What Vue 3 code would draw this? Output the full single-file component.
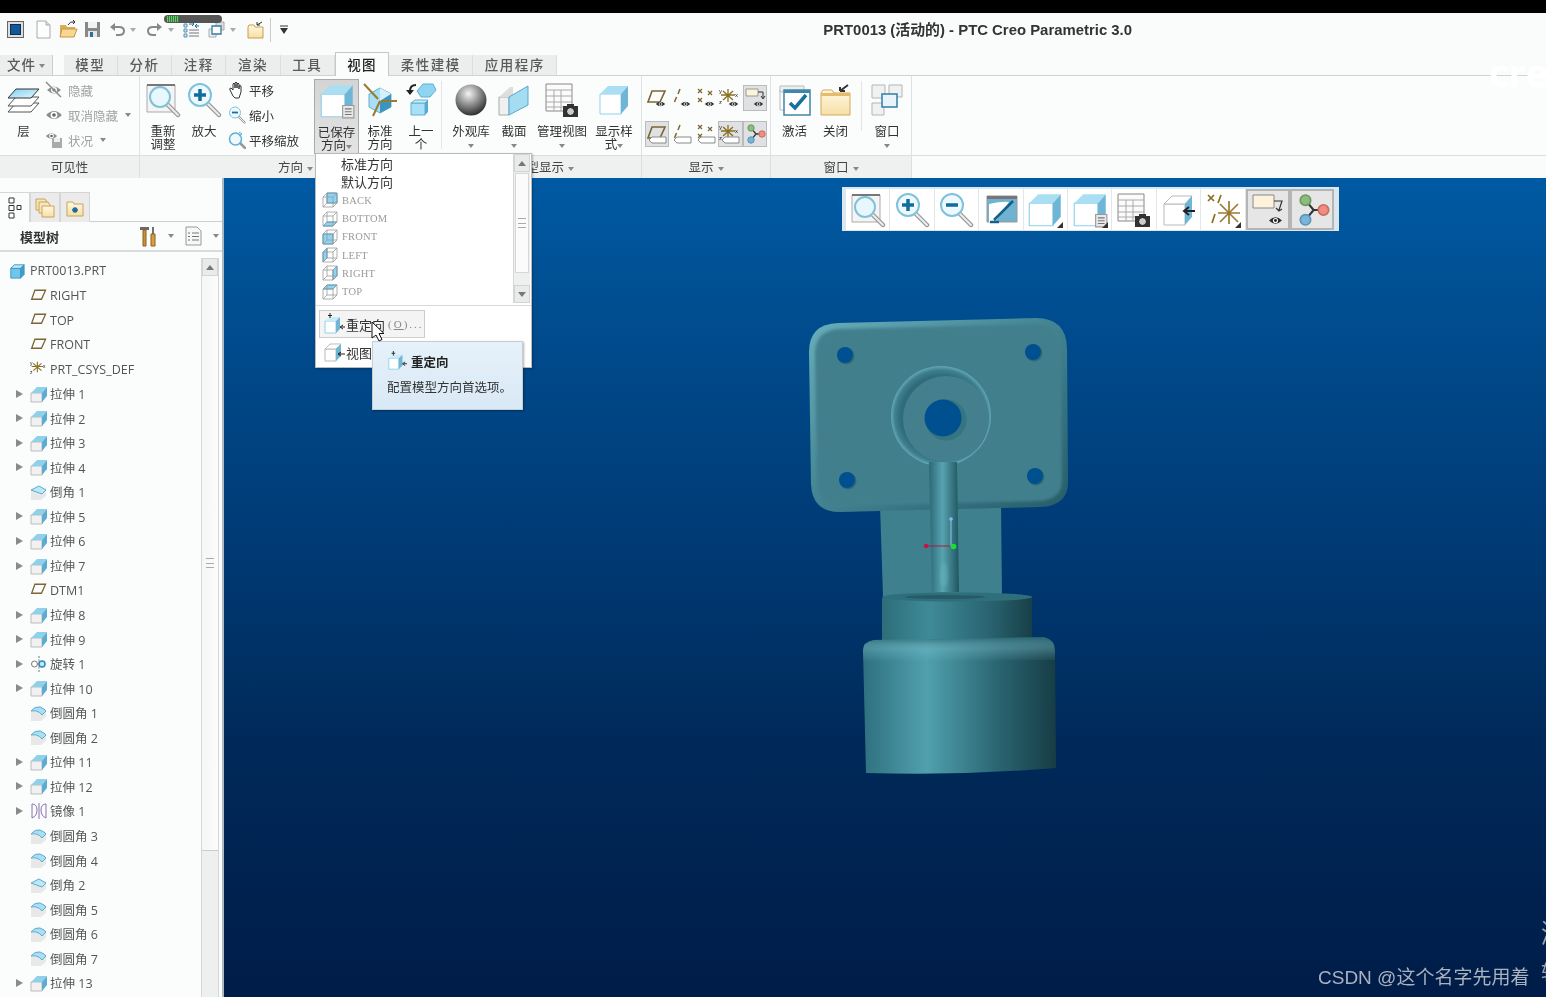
<template>
  <div class="app">
    <!-- shared icons -->
    <svg class="defs" width="0" height="0">
      <defs>
        <linearGradient id="gLayer" x1="0" y1="0" x2="1" y2="1"><stop offset="0" stop-color="#7fd0f0"/><stop offset="1" stop-color="#e6f6fc"/></linearGradient>
        <radialGradient id="gSphere" cx="0.42" cy="0.3" r="0.75"><stop offset="0" stop-color="#f4f4f4"/><stop offset="0.5" stop-color="#8a8a8a"/><stop offset="1" stop-color="#222"/></radialGradient>
        <linearGradient id="gPlate" x1="0" y1="0" x2="1" y2="1"><stop offset="0" stop-color="#68aebb"/><stop offset="0.55" stop-color="#3f7f8d"/><stop offset="1" stop-color="#255c69"/></linearGradient>
        <radialGradient id="gRing" cx="0.5" cy="0.5" r="0.5"><stop offset="0.8" stop-color="#2f6b78"/><stop offset="0.92" stop-color="#3f7f8d"/><stop offset="1" stop-color="#62a8b5"/></radialGradient>
        <linearGradient id="gStem"><stop offset="0" stop-color="#2c6875"/><stop offset="0.45" stop-color="#58a3b0"/><stop offset="1" stop-color="#1f5561"/></linearGradient>
        <linearGradient id="gCylA"><stop offset="0" stop-color="#2e6d7a"/><stop offset="0.32" stop-color="#3f8a98"/><stop offset="0.75" stop-color="#27606c"/><stop offset="1" stop-color="#173f47"/></linearGradient>
        <linearGradient id="gCylB"><stop offset="0" stop-color="#2f7080"/><stop offset="0.33" stop-color="#50a0ae"/><stop offset="0.72" stop-color="#28626e"/><stop offset="1" stop-color="#173d45"/></linearGradient>
        <linearGradient id="gBevel" x1="0" y1="0" x2="0" y2="1"><stop offset="0" stop-color="#2a6572" stop-opacity="0.9"/><stop offset="0.5" stop-color="#7cc0cc" stop-opacity="0.35"/><stop offset="1" stop-color="#7cc0cc" stop-opacity="0"/></linearGradient>
        <linearGradient id="gFolder" x1="0" y1="0" x2="0" y2="1"><stop offset="0" stop-color="#fff8e2"/><stop offset="1" stop-color="#f6dfa6"/></linearGradient>
        <filter id="soft" x="-10%" y="-10%" width="120%" height="120%"><feGaussianBlur stdDeviation="1.500"/></filter>
        <symbol id="cube" viewBox="0 0 32 32"><path d="M2 10h21v20H2z" fill="#fff" stroke="#8fd0ea"/><path d="M2 10l8-8h20l-7 8z" fill="#a9def3"/><path d="M23 10l7-8v20l-7 8z" fill="#6fb6d6"/></symbol>
        <symbol id="docbadge" viewBox="0 0 32 32"><path d="M21 20h10v11H21z" fill="#e8e8e8" stroke="#999"/><path d="M23 23h6M23 25.500h6M23 28h6" stroke="#777"/></symbol>
        <symbol id="corner" viewBox="0 0 36 36"><path d="M36 30v6h-6z" fill="#333"/></symbol>
        <symbol id="layer" viewBox="0 0 34 28"><path d="M9 17h23l-8 9H1z" fill="#fff" stroke="#555"/><path d="M9 11h23l-8 9H1z" fill="#fff" stroke="#555"/><path d="M9 3h23l-8 9H1z" fill="url(#gLayer)" stroke="#333"/></symbol>
        <symbol id="eye" viewBox="0 0 16 12"><path d="M1 6q7-7 14 0q-7 7-14 0z" fill="#8d8d8d"/><circle cx="8" cy="6" r="3" fill="#fff"/><circle cx="8" cy="6" r="1.600" fill="#666"/></symbol>
        <symbol id="eyedark" viewBox="0 0 16 12"><path d="M1 6q7-7 14 0q-7 7-14 0z" fill="#2b2b2b"/><circle cx="8" cy="6" r="2.800" fill="#fff"/><circle cx="8" cy="6" r="1.600" fill="#222"/></symbol>
        <symbol id="hide" viewBox="0 0 18 18"><use href="#eye" x="1" y="3" width="16" height="12"/><path d="M1 1l15 15" stroke="#8d8d8d" stroke-width="1.500"/></symbol>
        <symbol id="status" viewBox="0 0 18 18"><use href="#eye" x="0" y="0" width="13" height="10"/><path d="M7 7h10v10H7z" fill="#aaa"/><path d="M9 7h6v4H9z" fill="#eee"/></symbol>
        <symbol id="refit" viewBox="0 0 36 36"><path d="M2 3h28v27H2z" fill="#f4f4f4" stroke="#aaa"/><path d="M2 3h28" stroke="#777" stroke-width="2"/><path d="M22 22l11 11" stroke="#999" stroke-width="4.500" stroke-linecap="round"/><path d="M22 22l11 11" stroke="#eee" stroke-width="2" stroke-linecap="round"/><circle cx="15" cy="15" r="10" fill="#e8f7fc" stroke="#7fc2dc" stroke-width="2"/></symbol>
        <symbol id="zoomin" viewBox="0 0 36 36"><path d="M21 21l12 12" stroke="#999" stroke-width="4.500" stroke-linecap="round"/><path d="M21 21l12 12" stroke="#eee" stroke-width="2" stroke-linecap="round"/><circle cx="14" cy="13" r="11" fill="#eef9fd" stroke="#7fc2dc" stroke-width="2"/><path d="M14 7v12M8 13h12" stroke="#0f6d9f" stroke-width="3.500"/></symbol>
        <symbol id="zoomout" viewBox="0 0 36 36"><path d="M21 21l12 12" stroke="#999" stroke-width="4.500" stroke-linecap="round"/><path d="M21 21l12 12" stroke="#eee" stroke-width="2" stroke-linecap="round"/><circle cx="14" cy="13" r="11" fill="#eef9fd" stroke="#7fc2dc" stroke-width="2"/><path d="M8 13h12" stroke="#0f6d9f" stroke-width="3.500"/></symbol>
        <symbol id="panzoom" viewBox="0 0 18 18"><path d="M11 11l6 6" stroke="#999" stroke-width="2.500" stroke-linecap="round"/><circle cx="7.500" cy="8" r="6" fill="#eef9fd" stroke="#5fb0d2" stroke-width="1.500"/><path d="M11 1l3 2-3 2" fill="none" stroke="#5fb0d2"/></symbol>
        <symbol id="hand" viewBox="0 0 18 18"><path d="M5 15L2 9q-1-2 1-2l2 2V3q1-2 2 0v4-5q1-2 2 0v5-4q1-2 2 0v5-3q1-1 2 0v6l-2 6H7z" fill="#fff" stroke="#333" stroke-linejoin="round"/></symbol>
        <symbol id="std" viewBox="0 0 36 36"><path d="M18 6l11 6v13l-11 6-11-6V12z" fill="#a9def3" stroke="#5fb0d2"/><path d="M18 6l11 6-11 7z" fill="#d5f0fa"/><path d="M18 19l11-7v13l-11 6z" fill="#3d95bf"/><path d="M2 2l14 15M19 19h16M18 19L11 34" stroke="#9a7a30" stroke-width="2"/></symbol>
        <symbol id="prev" viewBox="0 0 36 36"><path d="M14 9l6-7h10l3 6-6 7H18z" fill="#8fd4f0" stroke="#5fb0d2"/><path d="M8 21h14v12H8z" fill="#a9e0f6" stroke="#5fb0d2"/><path d="M8 21l4-3h13l-3 3z" fill="#c9ecf9" stroke="#5fb0d2"/><path d="M22 21l3-3v12l-3 3z" fill="#5aa9cf"/><path d="M13 3Q7 3 7 9" fill="none" stroke="#222" stroke-width="2"/><path d="M3 8h8l-4 5z" fill="#222"/></symbol>
        <symbol id="sphere" viewBox="0 0 32 32"><circle cx="16" cy="16" r="15.500" fill="url(#gSphere)"/></symbol>
        <symbol id="section" viewBox="0 0 32 32"><path d="M1 13h10v18H1z" fill="#f0f0f0" stroke="#aaa"/><path d="M1 13L12 3h3v10z" fill="#ddd"/><path d="M11 13l19-11v19L11 31z" fill="#a4dcf2" stroke="#59a9cc"/></symbol>
        <symbol id="table" viewBox="0 0 36 36"><path d="M2 2h26v27H2z" fill="#fbfbfb" stroke="#888"/><path d="M2 8h26M2 14h26M2 20h26M2 25h26M10 8v21M17 8v21" stroke="#aaa"/><path d="M19 24h15v11H19z" fill="#333"/><path d="M23 22h7v3h-7z" fill="#333"/><circle cx="26.500" cy="29.500" r="4" fill="#ccc" stroke="#111"/></symbol>
        <symbol id="activate" viewBox="0 0 32 32"><path d="M1 2h24v6H1z" fill="#eee" stroke="#bbb"/><path d="M1 6v20h4" fill="#fff" stroke="#bbb"/><path d="M5 6h26v25H5z" fill="#fff" stroke="#3f87a8" stroke-width="1.500"/><path d="M5 6h26v3H5z" fill="#3f87a8"/><path d="M11 19l5 5 11-13" fill="none" stroke="#17709f" stroke-width="3.500"/></symbol>
        <symbol id="closewin" viewBox="0 0 32 32"><path d="M1 9l2-3h9l2 3h16v22H1z" fill="url(#gFolder)" stroke="#d4a95a"/><path d="M1 9h29v3H1z" fill="#e6bc6c"/><path d="M28 1l-8 6M20 7v-4M20 7h5" stroke="#333" stroke-width="2" fill="none"/></symbol>
        <symbol id="windows" viewBox="0 0 32 32"><path d="M1 1h13v13H1zM18 1h13v12H18zM1 19h12v12H1z" fill="#f1f1f1" stroke="#b5b5b5"/><path d="M11 10h15v13H11z" fill="#e8f4fa" stroke="#2f7ea6" stroke-width="1.500"/></symbol>
        <symbol id="plane" viewBox="0 0 22 22"><path d="M6 4h13l-5 11H2z" fill="none" stroke="#7d6530" stroke-width="1.600"/></symbol>
        <symbol id="axis" viewBox="0 0 22 22"><path d="M9 2L7 7M5.500 10L3.500 15" stroke="#7d6530" stroke-width="1.500"/></symbol>
        <symbol id="points" viewBox="0 0 22 22"><path d="M3 2l4 4m0-4L3 6M13 4l4 4m0-4l-4 4M3 11l4 4m0-4l-4 4" stroke="#7d6530" stroke-width="1.200"/></symbol>
        <symbol id="csys" viewBox="0 0 22 22"><path d="M9 2v13M4 4l10 9M14 4L4 13M2 8h14" stroke="#8a6d20" stroke-width="1.300"/><text x="0" y="6" font-size="6" font-family="Liberation Sans" fill="#222">y</text><text x="0" y="17" font-size="6" font-family="Liberation Sans" fill="#222">z</text><text x="16" y="10" font-size="6" font-family="Liberation Sans" fill="#222">x</text></symbol>
        <symbol id="annot" viewBox="0 0 22 22"><path d="M2 2h12v7H2z" fill="#fdf3dc" stroke="#999"/><path d="M14 5h5v6m-2-2l2 3 2-3" fill="none" stroke="#333"/></symbol>
        <symbol id="badgeeye" viewBox="0 0 22 22"><use href="#eyedark" x="9" y="13" width="11" height="8"/></symbol>
        <symbol id="badgetag" viewBox="0 0 22 22"><path d="M3 17l3-3h14v6H6z" fill="#fff" stroke="#8a8a8a"/></symbol>
        <symbol id="node" viewBox="0 0 22 22"><path d="M7 5l5 6-5 6M12 11h6" fill="none" stroke="#333" stroke-width="1.300"/><circle cx="7" cy="5" r="3.200" fill="#8cbc80" stroke="#6a9a60"/><circle cx="18" cy="11" r="3.200" fill="#ee8d80" stroke="#c76c60"/><circle cx="7" cy="17" r="3.200" fill="#7ab4d8" stroke="#5a94b8"/></symbol>
        <symbol id="sectionview" viewBox="0 0 36 36"><path d="M4 4h30v26H4z" fill="#6fb3d0" stroke="#999"/><path d="M4 4h30v3H4z" fill="#777"/><path d="M6 30V12q14-3 20-2l-14 20z" fill="#fff"/><path d="M7 30h9M11 28L30 9" stroke="#145f8c" stroke-width="2.500"/></symbol>
        <symbol id="cubearrow" viewBox="0 0 36 36"><path d="M4 12h21v21H4z" fill="#fff" stroke="#b9b9b9"/><path d="M4 12l8-8h20l-7 8z" fill="#fff" stroke="#b9b9b9"/><path d="M25 12l7-8v21l-7 8z" fill="#6fb6d6"/><path d="M35 19H24m5-4l-5 4 5 4" fill="none" stroke="#222" stroke-width="2"/></symbol>
        <symbol id="datums" viewBox="0 0 36 36"><path d="M3 3l6 6m0-6L3 9M16 3l-3 8M10 22l-3 9" stroke="#8a6d20" stroke-width="1.700"/><path d="M24 9v23M15 12l18 18M33 12L15 30M13 21h22" stroke="#9a7a30" stroke-width="1.700"/></symbol>
        <symbol id="annotlarge" viewBox="0 0 36 36"><path d="M3 3h21v13H3z" fill="#fdf3dc" stroke="#888"/><path d="M24 9h8l-3 9m-3-2l3 3 3-2" fill="none" stroke="#333" stroke-width="1.200"/><use href="#eyedark" x="18" y="23" width="15" height="11"/></symbol>
        <symbol id="part" viewBox="0 0 18 18"><path d="M2 6h11v11H2z" fill="#6fc5ec" stroke="#3c94be"/><path d="M2 6l4-4h11l-4 4z" fill="#bce8f8" stroke="#3c94be"/><path d="M13 6l4-4v11l-4 4z" fill="#3f9fcb" stroke="#3c94be"/></symbol>
        <symbol id="extrude" viewBox="0 0 18 18"><path d="M1 8h11v9H1z" fill="#f1f1f1" stroke="#bbb"/><path d="M1 8l6-6h10l-5 6z" fill="#8fd0ea"/><path d="M12 8l5-6v9l-5 6z" fill="#5cabd0"/></symbol>
        <symbol id="round" viewBox="0 0 18 18"><path d="M1 8h10v9H1z" fill="#e8e8e8"/><path d="M11 8l5-3v8l-5 4z" fill="#e8e8e8"/><path d="M1 7q4-5 9-4q5 2 6 4l-4 4q-2-3-6-4z" fill="#a9def3" stroke="#5cabd0"/></symbol>
        <symbol id="chamfer" viewBox="0 0 18 18"><path d="M1 8h10v9H1z" fill="#e8e8e8"/><path d="M11 8l5-3v8l-5 4z" fill="#e8e8e8"/><path d="M1 7l8-4 7 4-4 4z" fill="#bce8f8" stroke="#5cabd0"/></symbol>
        <symbol id="revolve" viewBox="0 0 18 18"><path d="M9 1v16" stroke="#777" stroke-dasharray="2 1.500"/><circle cx="4.500" cy="9" r="3" fill="#fff" stroke="#777"/><circle cx="12" cy="9" r="3" fill="#bce8f8" stroke="#2f88b8" stroke-width="1.500"/></symbol>
        <symbol id="mirror" viewBox="0 0 18 18"><path d="M2 2q5 0 5 6t-5 8zM16 2q-5 0-5 6t5 8z" fill="none" stroke="#8a70b0"/><path d="M9 1v16" stroke="#8a70b0"/></symbol>
        <symbol id="reorient" viewBox="0 0 22 22"><path d="M2 8h11v12H2z" fill="#fff" stroke="#8fd0ea"/><path d="M2 8l5-4h10l-4 4z" fill="#c9ecf9"/><path d="M13 8l4-4v12l-4 4z" fill="#6fb6d6"/><path d="M7 0v5M5 2.500h4M22 14h-4m2-2l-3 2 3 2" stroke="#222" fill="none"/></symbol>
        <symbol id="normal" viewBox="0 0 22 22"><path d="M2 8h11v12H2z" fill="#fff" stroke="#bbb"/><path d="M2 8l5-5h11l-5 5z" fill="#fff" stroke="#bbb"/><path d="M13 8l5-5v12l-5 5z" fill="#6fb6d6"/><path d="M22 13h-7m3-2l-3 2 3 2" stroke="#222" fill="none"/></symbol>
      </defs>
    </svg>

    <div class="blackbar"></div>

    <div class="titlebar">
      <div class="qa">
        <span class="qa-app"><span></span></span>
        <svg class="q" style="margin-left:11px" width="17" height="19" viewBox="0 0 17 19"><path d="M2 1h9l4 4v13H2z" fill="#fdfdfd" stroke="#aaa"/><path d="M11 1v4h4" fill="#ddd" stroke="#aaa"/></svg>
        <svg class="q" style="margin-left:7px" width="19" height="19" viewBox="0 0 19 19"><path d="M1 5h6l1 2h8v10H1z" fill="#d9ad5a"/><path d="M3 9h15l-3 8H1z" fill="#f5d896" stroke="#c9973f"/><path d="M9 5q2-4 6-3m-1-2l2 2-2 2" fill="none" stroke="#333"/></svg>
        <svg class="q" style="margin-left:6px" width="17" height="17" viewBox="0 0 17 17"><path d="M1 1h15v15H1z" fill="#888"/><path d="M4 1h9v6H4z" fill="#f2f2f2"/><path d="M4 10h9v6H4z" fill="#e6e6e6"/><path d="M6 11h3v5H6z" fill="#2d6f9c"/></svg>
        <svg class="q dim" style="margin-left:8px" width="16" height="14" viewBox="0 0 16 14"><path d="M3 4h7q5 0 5 4t-5 4H7" fill="none" stroke="#888" stroke-width="2"/><path d="M1 4l5-4v8z" fill="#888"/></svg>
        <i class="caret q-caret"></i>
        <svg class="q dim" style="margin-left:11px" width="16" height="14" viewBox="0 0 16 14"><path d="M13 4H6Q1 4 1 8t5 4h3" fill="none" stroke="#888" stroke-width="2"/><path d="M15 4l-5-4v8z" fill="#888"/></svg>
        <i class="caret q-caret"></i>
        <svg class="q" style="margin-left:9px" width="17" height="17" viewBox="0 0 17 17"><path d="M1 3h3v3H1zM1 8h3v3H1zM1 13h3v3H1z" fill="#cfe8f5" stroke="#5a8fb0"/><path d="M6 9h10M6 12h10M6 15h10" stroke="#777"/><path d="M6 3h5m-2-2l2 2-2 2M16 5h-4m2-2l-2 2 2 2" stroke="#1c6a96" fill="none"/></svg>
        <svg class="q" style="margin-left:8px" width="17" height="17" viewBox="0 0 17 17"><path d="M1 8h7v8H1z" fill="#eee" stroke="#aaa"/><path d="M8 1h8v8H8z" fill="#ddd" stroke="#aaa"/><path d="M4 5h9v8H4z" fill="#fff" stroke="#2f7ea6" stroke-width="1.300"/></svg>
        <i class="caret q-caret"></i>
        <svg class="q" style="margin-left:11px" width="18" height="18" viewBox="0 0 18 18"><path d="M1 6l1-2h5l1 2h8v11H1z" fill="url(#gFolder)" stroke="#c99e4e"/><path d="M15 1l-5 3m0-3v3h3" stroke="#333" fill="none"/></svg>
        <span class="qa-sep"></span>
        <svg class="q" style="margin-left:8px" width="10" height="10" viewBox="0 0 10 10"><path d="M1 1h8" stroke="#333"/><path d="M1 3h8L5 9z" fill="#333"/></svg>
      </div>
      <div class="title">PRT0013 (活动的) - PTC Creo Parametric 3.0</div>
    </div>

    <div class="tabs">
      <div class="tab file">文件<i class="caret"></i></div>
      <div class="tab-gap"></div>
      <div v-for="t in tabs" :key="t" class="tab" :class="{ on: t === '视图', wide: t.length > 2 }">{{ t }}</div>
    </div>

    <div class="ribbon">
      <section class="rg vis">
        <div class="big w37">
          <svg width="34" height="28" class="bi"><use href="#layer"/></svg>
          <span>层</span>
        </div>
        <div class="smalls gray">
          <div class="sm"><svg width="18" height="18"><use href="#hide"/></svg>隐藏</div>
          <div class="sm"><svg width="18" height="18"><use href="#eye"/></svg>取消隐藏<i class="caret"></i></div>
          <div class="sm"><svg width="18" height="18"><use href="#status"/></svg>状况<i class="caret"></i></div>
        </div>
      </section>

      <section class="rg orient">
        <div class="big" style="width:46px"><svg width="36" height="36"><use href="#refit"/></svg><span class="tight">重新<br>调整</span></div>
        <div class="big" style="width:36px"><svg width="36" height="36"><use href="#zoomin"/></svg><span class="tight">放大</span></div>
        <div class="smalls dark">
          <div class="sm"><svg width="18" height="18"><use href="#hand"/></svg>平移</div>
          <div class="sm"><svg width="18" height="18"><use href="#zoomout"/></svg>缩小</div>
          <div class="sm"><svg width="18" height="18"><use href="#panzoom"/></svg>平移缩放</div>
        </div>
        <div class="big saved">
          <svg width="36" height="36"><use href="#cube"/><use href="#docbadge"/></svg>
          <span class="tight">已保存<br>方向<i class="caret"></i></span>
        </div>
        <div class="big" style="width:42px"><svg width="36" height="36"><use href="#std"/></svg><span class="tight">标准<br>方向</span></div>
        <div class="big" style="width:40px"><svg width="36" height="36"><use href="#prev"/></svg><span class="tight">上一<br>个</span></div>
        <span class="vsep"></span>
        <div class="big" style="width:58px"><svg width="32" height="36"><use href="#sphere"/></svg><span class="tight">外观库<br><i class="caret"></i></span></div>
        <div class="big" style="width:28px"><svg width="32" height="36"><use href="#section"/></svg><span class="tight">截面<br><i class="caret"></i></span></div>
        <div class="big" style="width:68px"><svg width="36" height="36"><use href="#table"/></svg><span class="tight">管理视图<br><i class="caret"></i></span></div>
        <div class="big" style="width:36px"><svg width="32" height="36"><use href="#cube"/></svg><span class="tight">显示样<br>式<i class="caret"></i></span></div>
      </section>

      <section class="rg disp">
        <div v-for="(d, i) in displayIcons" :key="i" class="di" :class="{ on: d.on }">
          <svg width="22" height="22"><use :href="'#' + d.base"/><use v-if="d.badge" :href="'#' + d.badge"/></svg>
        </div>
      </section>

      <section class="rg wins">
        <div class="big" style="width:41px"><svg width="32" height="36"><use href="#activate"/></svg><span>激活</span></div>
        <div class="big" style="width:41px"><svg width="32" height="36"><use href="#closewin"/></svg><span>关闭</span></div>
        <span class="vsep wsep"></span>
        <div class="big" style="width:50px"><svg width="32" height="36"><use href="#windows"/></svg><span class="tight">窗口<br><i class="caret"></i></span></div>
      </section>
    </div>

    <div class="glabels">
      <div class="gl" style="width:140px">可见性</div>
      <div class="gl right" style="width:175px">方向<i class="caret"></i></div>
      <div class="gl left" style="width:327px">模型显示<i class="caret"></i></div>
      <div class="gl" style="width:129px">显示<i class="caret"></i></div>
      <div class="gl" style="width:141px">窗口<i class="caret"></i></div>
      <div class="gl rest"></div>
    </div>

    <div class="main">
      <aside class="panel">
        <div class="ptabs">
          <div class="ptab on">
            <svg width="14" height="22" viewBox="0 0 14 22"><path d="M1 1h5v5H1zM1 8.500h5v5H1zM1 16h5v5H1zM9 8.500h4v4H9z" fill="#fff" stroke="#333"/></svg>
          </div>
          <div class="ptab">
            <svg width="20" height="20" viewBox="0 0 20 20"><path d="M1 1h9l2 3v8H1z" fill="#f6e6bc" stroke="#c9a45a"/><path d="M4 4h9l2 3v8H4z" fill="#f6e6bc" stroke="#c9a45a"/><path d="M7 8h12v11H7z" fill="url(#gFolder)" stroke="#c9a45a"/></svg>
          </div>
          <div class="ptab">
            <svg width="18" height="18" viewBox="0 0 18 18"><path d="M1 3h6l1 2h9v12H1z" fill="url(#gFolder)" stroke="#c9a45a"/><path d="M9 8v6M6 11h6M7 9l4 4m0-4l-4 4" stroke="#1c6a96" stroke-width="1.300"/></svg>
          </div>
        </div>
        <div class="phead">
          <b>模型树</b>
          <svg class="ph1" width="18" height="21" viewBox="0 0 18 21"><path d="M1 1h9v3H1z" fill="#6a6a6a"/><path d="M4 4h3v16H4z" fill="#c98f3e" stroke="#8a6020"/><path d="M14 1v7" stroke="#444" stroke-width="1.500"/><path d="M12 8h4v12h-4z" fill="#d5a040" stroke="#8a6020"/></svg>
          <i class="caret"></i>
          <svg class="ph2" width="17" height="20" viewBox="0 0 17 20"><path d="M1 1h11l4 4v14H1z" fill="#f7f7f7" stroke="#999"/><path d="M7 7h7M7 10.500h7M7 14h7" stroke="#777"/><path d="M3 7h2M3 10.500h2M3 14h2" stroke="#4f8a4f"/></svg>
          <i class="caret"></i>
        </div>
        <div class="treewrap">
          <ul class="tree">
            <li v-for="n in tree" :key="n.label" class="node" :class="{ root: n.root }">
              <span v-if="!n.root" class="tw"><i v-if="n.arrow"></i></span>
              <svg :width="n.root ? 16 : 18" :height="n.root ? 16 : 18"><use :href="'#' + n.icon"/></svg>
              <span class="lbl">{{ n.label }}</span>
            </li>
          </ul>
          <div class="vscroll">
            <div class="sbtn"><i class="up"></i></div>
            <div class="thumb"><span class="grip"></span></div>
          </div>
        </div>
      </aside>

      <div class="viewport">
        <div class="floatbar">
          <div v-for="(b, i) in floatIcons" :key="i" class="fb" :class="{ on: b.on }">
            <svg width="36" height="36"><use :href="'#' + b.id"/><use v-if="b.badge" :href="'#' + b.badge"/><use v-if="b.corner" href="#corner"/></svg>
          </div>
        </div>

        <svg class="model" width="300" height="490" viewBox="790 300 300 490">
          <!-- back rib -->
          <path d="M880 505L1001 505L1002 596L883 596z" fill="#3f808e"/>
          <!-- plate -->
          <path d="M838 323L1036 318Q1066 318 1067 348L1068 482Q1068 506 1040 507L840 512Q812 512 811 484L809 352Q809 324 838 323z" fill="url(#gPlate)"/>
          <path d="M840 329L1034 324Q1060 324 1061 350L1062 480Q1062 500 1038 501L842 506Q818 506 817 482L815 354Q815 330 840 329z" fill="#437f8d" filter="url(#soft)"/>
          <!-- mounting holes -->
          <g v-for="h in holes" :key="h.x">
            <circle :cx="h.x + 1" :cy="h.y + 1" r="8.500" fill="#2f6a77"/>
            <circle :cx="h.x" :cy="h.y" r="8" fill="#00508f"/>
          </g>
          <!-- boss -->
          <circle cx="941" cy="416" r="50" fill="url(#gRing)"/>
          <circle cx="946" cy="419" r="43" fill="#437f8d"/>
          <circle cx="946" cy="420" r="20.500" fill="#357481"/>
          <circle cx="943" cy="418" r="18.500" fill="#004f8e"/>
          <!-- stem -->
          <path d="M929 462h28l2 130h-27z" fill="url(#gStem)"/>
          <ellipse cx="944" cy="575" rx="4" ry="12" fill="#6bb5c1" opacity="0.45" filter="url(#soft)"/>
          <!-- upper cylinder -->
          <path d="M882 598L1032 596L1032 642L882 645z" fill="url(#gCylA)"/>
          <ellipse cx="957" cy="597" rx="75" ry="4.500" fill="#2f6e7b"/>
          <ellipse cx="945" cy="597" rx="40" ry="2" fill="#265a66"/>
          <!-- lower cylinder -->
          <path d="M874 640L1044 637Q1055 640 1055 650L1056 768Q960 776 866 773L863 650Q863 642 874 640z" fill="url(#gCylB)"/>
          <path d="M874 640L1044 637Q1055 640 1055 650L1055 660L863 662L863 650Q863 642 874 640z" fill="url(#gBevel)"/>
          <!-- csys glyph -->
          <path d="M926 546h27" stroke="#b5183a" stroke-width="1"/>
          <path d="M951 519v27" stroke="#8cc8f0" stroke-width="1"/>
          <circle cx="926" cy="546" r="2.200" fill="#c8143c"/>
          <circle cx="951" cy="519" r="1.800" fill="#7cc0f0"/>
          <circle cx="953.500" cy="546.500" r="2.800" fill="#16e030"/>
        </svg>

        <div class="mark">CSDN @这个名字先用着</div>
        <div class="edge e1">激</div>
        <div class="edge e2">转</div>
      </div>
    </div>

    <!-- saved orientations menu -->
    <div class="menu">
      <div class="menu-top">
        <ul class="views">
          <li class="txt">标准方向</li>
          <li class="txt">默认方向</li>
          <li v-for="v in views" :key="v.name" class="view">
            <svg width="18" height="18" viewBox="0 0 18 18">
              <path :d="v.face" fill="#8fd4f2" stroke="#4ba6d0"/>
              <path d="M2 6h10v10H2zM6 2h10v10H6zM2 6l4-4M12 6l4-4M2 16l4-4M12 16l4-4" fill="none" stroke="#9a9a9a" stroke-width="0.800"/>
            </svg>
            <span>{{ v.name }}</span>
          </li>
        </ul>
        <div class="mscroll">
          <div class="sbtn"><i class="up"></i></div>
          <div class="mthumb"><span class="grip"></span></div>
          <div class="sbtn"><i class="down"></i></div>
        </div>
      </div>
      <div class="menu-sep"></div>
      <div class="mbtn hover"><svg width="22" height="22"><use href="#reorient"/></svg>重定向<span class="acc">(<u>O</u>)...</span></div>
      <div class="mbtn"><svg width="22" height="22"><use href="#normal"/></svg>视图法向</div>
    </div>

    <div class="tooltip">
      <div class="tip-head"><svg width="20" height="20"><use href="#reorient"/></svg><b>重定向</b></div>
      <p>配置模型方向首选项。</p>
    </div>

    <svg class="cursor" width="14" height="22" viewBox="0 0 14 22"><path d="M1 1v16l4-3 3 6 3-1.500-3-6h5z" fill="#fff" stroke="#111"/></svg>
    <div class="progress"><span></span></div>
    <div class="watermark">cre</div>
  </div>
</template>

<script setup>
const tabs = ['模型', '分析', '注释', '渲染', '工具', '视图', '柔性建模', '应用程序']

const displayIcons = [
  { base: 'plane', badge: 'badgeeye' },
  { base: 'axis', badge: 'badgeeye' },
  { base: 'points', badge: 'badgeeye' },
  { base: 'csys', badge: 'badgeeye' },
  { base: 'annot', badge: 'badgeeye', on: true },
  { base: 'plane', badge: 'badgetag', on: true },
  { base: 'axis', badge: 'badgetag' },
  { base: 'points', badge: 'badgetag' },
  { base: 'csys', badge: 'badgetag', on: true },
  { base: 'node', on: true }
]

const floatIcons = [
  { id: 'refit' },
  { id: 'zoomin' },
  { id: 'zoomout' },
  { id: 'sectionview' },
  { id: 'cube', corner: true },
  { id: 'cube', badge: 'docbadge', corner: true },
  { id: 'table' },
  { id: 'cubearrow' },
  { id: 'datums', corner: true },
  { id: 'annotlarge', on: true },
  { id: 'node', on: true }
]

const views = [
  { name: 'BACK', face: 'M6 2h10v10H6z' },
  { name: 'BOTTOM', face: 'M2 16l4-4h10l-4 4z' },
  { name: 'FRONT', face: 'M2 6h10v10H2z' },
  { name: 'LEFT', face: 'M2 6l4-4v10l-4 4z' },
  { name: 'RIGHT', face: 'M12 6l4-4v10l-4 4z' },
  { name: 'TOP', face: 'M2 6l4-4h10l-4 4z' }
]

const holes = [
  { x: 845, y: 355 },
  { x: 1033, y: 352 },
  { x: 847, y: 480 },
  { x: 1035, y: 476 }
]

const ext = (n) => ({ label: '拉伸 ' + n, icon: 'extrude', arrow: true })
const rnd = (n) => ({ label: '倒圆角 ' + n, icon: 'round' })

const tree = [
  { label: 'PRT0013.PRT', icon: 'part', root: true },
  { label: 'RIGHT', icon: 'plane' },
  { label: 'TOP', icon: 'plane' },
  { label: 'FRONT', icon: 'plane' },
  { label: 'PRT_CSYS_DEF', icon: 'csys' },
  ext(1), ext(2), ext(3), ext(4),
  { label: '倒角 1', icon: 'chamfer' },
  ext(5), ext(6), ext(7),
  { label: 'DTM1', icon: 'plane' },
  ext(8), ext(9),
  { label: '旋转 1', icon: 'revolve', arrow: true },
  ext(10),
  rnd(1), rnd(2),
  ext(11), ext(12),
  { label: '镜像 1', icon: 'mirror', arrow: true },
  rnd(3), rnd(4),
  { label: '倒角 2', icon: 'chamfer' },
  rnd(5), rnd(6), rnd(7),
  ext(13)
]
</script>

<style>
html, body { margin: 0; background: #000; }
</style>

<style scoped>
.app {
  position: relative;
  width: 1546px;
  height: 997px;
  overflow: hidden;
  display: flex;
  flex-direction: column;
  background: #fbfcfc;
  color: #333;
  font-family: "Noto Sans CJK SC", "Open Sans", sans-serif;
  font-size: 12.5px;
  filter: blur(0.35px);
}
.defs { position: absolute; }
.caret {
  display: inline-block;
  width: 0;
  height: 0;
  margin-left: 3px;
  vertical-align: middle;
  border-left: 3.5px solid transparent;
  border-right: 3.5px solid transparent;
  border-top: 4px solid #888;
}
.blackbar { height: 13px; background: #000; flex: none; }

.titlebar { height: 40px; flex: none; display: flex; align-items: center; background: #fafbfb; }
.qa { display: flex; align-items: center; padding-left: 7px; padding-bottom: 7px; }
.qa-app {
  width: 17px; height: 17px; box-sizing: border-box;
  background: #ddd; border: 1px solid #666; padding: 2px; display: block;
}
.qa-app span { display: block; height: 100%; background: #11589a; border: 1px solid #0b2f55; box-sizing: border-box; }
.q { flex: none; }
.q-caret { margin-left: 5px; border-top-color: #aaa; }
.qa-sep { width: 1px; height: 24px; background: #ccc; margin-left: 5px; }
.title {
  margin-left: auto;
  margin-right: 414px;
  padding-bottom: 10px;
  font: bold 14.9px "Liberation Sans", "Noto Sans CJK SC", sans-serif;
  color: #333;
}

.tabs { height: 23px; flex: none; display: flex; align-items: flex-end; background: #fafbfb; border-bottom: 1px solid #cfd3d5; box-sizing: border-box; }
.tab {
  width: 54.3px; height: 20px; box-sizing: border-box;
  background: #eceeee; border-right: 1px solid #ddd;
  color: #5a5a5a; font-size: 13.5px; font-weight: 500; letter-spacing: 1.5px;
  text-align: center; line-height: 19px;
}
.tab.wide { width: 84px; }
.tab.file { width: 53px; border-right: 1px solid #ccc; letter-spacing: 1px; }
.tab-gap { width: 10.5px; }
.tab.on {
  line-height: 23px; background: #fbfcfc;
  border: 1px solid #c4c8ca; border-bottom: 0; color: #222; margin-bottom: -1px; height: 24px;
}

.ribbon { position: relative; height: 79px; flex: none; display: flex; background: #fbfcfc; }
.rg { display: flex; box-sizing: border-box; border-right: 1px solid #dfe2e3; height: 100%; }
.vis { width: 140px; padding-left: 5px; }
.orient { width: 502px; }
.disp { width: 129px; display: grid; grid-template-columns: repeat(5, 24.4px); grid-template-rows: 36px 36px; padding: 4px 0 0 3px; align-content: start; }
.wins { width: 141px; padding-left: 3px; }
.big {
  display: flex; flex-direction: column; align-items: center;
  box-sizing: border-box; padding-top: 6px; flex: none; text-align: center;
}
.big > svg { height: 36px; flex: none; }
.big > span { margin-top: 6px; line-height: 13px; white-space: nowrap; }
.big > span .caret { margin-left: 4px; }
.big > span.tight br + .caret { margin-left: 0; }
.w37 { width: 37px; padding-top: 10px; }
.w37 > svg { height: 28px; }
.w37 > span { margin-top: 10px; }
.saved {
  width: 45px; height: 75px; margin: 3px 0 0 0; padding-top: 3px;
  background: linear-gradient(#d4d4d4, #e4e4e4); border: 1px solid #aaa; border-bottom: 0;
}
.smalls { display: flex; flex-direction: column; padding-top: 1.5px; }
.sm { height: 25px; display: flex; align-items: center; white-space: nowrap; }
.sm svg { margin-right: 2px; flex: none; }
.sm .caret { margin-left: 7px; }
.gray { padding-left: 3px; color: #a2a2a2; }
.gray .sm svg { margin-right: 5px; }
.dark { width: 92px; box-sizing: border-box; padding-left: 6px; color: #333; }
.dark .sm svg { margin-right: 3px; }
.vsep { width: 1px; height: 68px; margin-top: 5px; background: #e3e5e6; flex: none; }
.wsep { margin: 5px 0 0 5px; height: 50px; }
.di { width: 24.4px; height: 26px; display: flex; align-items: center; justify-content: center; box-sizing: border-box; margin-top: 5px; }
.di.on { background: #dfe1e2; border: 1px solid #bbb; }
.watermark {
  position: absolute; left: 1489px; top: 52px;
  font: bold 38px "Open Sans", sans-serif; color: #fff; line-height: 40px; white-space: nowrap;
}

.glabels { height: 23px; flex: none; display: flex; background: #eff1f1; border-top: 1px solid #dcdfe0; box-sizing: border-box; }
.gl { box-sizing: border-box; border-right: 1px solid #dcdfe0; text-align: center; line-height: 22px; color: #444; white-space: nowrap; overflow: hidden; }
.gl.right { text-align: right; padding-right: 2px; border-right: 0; }
.gl.left { text-align: left; padding-left: 199px; }
.gl .caret { margin-left: 4px; }
.gl.rest { flex: 1; border-right: 0; background: #fafbfb; }

.main { flex: 1; min-height: 0; display: flex; }
.panel {
  width: 224px; flex: none; box-sizing: border-box;
  display: flex; flex-direction: column;
  background: #fbfcfc; border-right: 2px solid #aebac1;
}
.ptabs { display: flex; height: 30px; margin-top: 14px; flex: none; box-sizing: border-box; border-bottom: 1px solid #cdd1d3; }
.ptab {
  width: 30px; height: 30px; box-sizing: border-box;
  display: flex; align-items: center; justify-content: center;
  background: #ebebeb; border: 1px solid #d6d6d6; border-bottom: 0;
}
.ptab.on { background: #fbfcfc; border-left: 0; height: 30px; position: relative; }
.phead { height: 30px; flex: none; display: flex; align-items: center; box-sizing: border-box; border-bottom: 2px solid #d9dcdd; padding-left: 20px; }
.phead b { font-size: 13px; color: #333; width: 119px; }
.phead .caret { margin-left: 11px; }
.ph2 { margin-left: 11px; }
.treewrap { flex: 1; min-height: 0; display: flex; }
.tree { flex: 1; margin: 0; padding: 6.7px 0 0; list-style: none; overflow: hidden; }
.node {
  height: 24.56px; display: flex; align-items: center; padding-left: 16px;
  color: #555; font: 12.5px "Open Sans", "Noto Sans CJK SC", sans-serif; white-space: nowrap;
}
.node.root { padding-left: 9px; }
.node.root .lbl { margin-left: 5px; }
.tw { width: 14px; flex: none; }
.tw i { display: block; width: 0; height: 0; border-top: 4.5px solid transparent; border-bottom: 4.5px solid transparent; border-left: 7px solid #8a8a8a; }
.lbl { margin-left: 2px; }
.vscroll { width: 18px; margin: 6px 3px 0 0; flex: none; background: #eef0f0; border-left: 1px solid #d5d7d8; border-right: 1px solid #d5d7d8; box-sizing: border-box; }
.sbtn { height: 18px; display: flex; align-items: center; justify-content: center; background: #e9ebeb; border: 1px solid #d2d4d5; box-sizing: border-box; }
.sbtn i { display: block; width: 0; height: 0; border-left: 4px solid transparent; border-right: 4px solid transparent; }
.sbtn .up { border-bottom: 5px solid #777; }
.sbtn .down { border-top: 5px solid #777; }
.thumb { height: 575px; background: linear-gradient(90deg, #f4f5f5, #fcfcfc); border-bottom: 1px solid #ccc; display: flex; align-items: center; justify-content: center; box-sizing: border-box; }
.grip { display: block; width: 8px; height: 8px; border-top: 1px solid #aaa; border-bottom: 1px solid #aaa; background: linear-gradient(#aaa, #aaa) center / 100% 1px no-repeat; }

.viewport {
  position: relative; flex: 1; min-width: 0; overflow: hidden;
  background: linear-gradient(#005aa3 0%, #004c8e 18%, #003a74 45%, #002a5a 68%, #001c48 100%);
}
.floatbar {
  position: absolute; left: 618px; top: 9px;
  width: 497px; height: 44px; box-sizing: border-box; padding: 2px 5px 1px 4px;
  display: flex; background: #dbe7ef;
}
.fb { flex: none; width: 44.4px; box-sizing: border-box; display: flex; align-items: center; justify-content: center; background: #fff; border-right: 1px solid #e1e7ea; }
.fb.on { background: #e6e6e6; border: 2px solid #b5b5b5; }
.model { position: absolute; left: 566px; top: 122px; }
.mark { position: absolute; left: 1094px; top: 784px; font: 19px "Liberation Sans", "Noto Sans CJK SC", sans-serif; color: #a9b2bf; white-space: nowrap; }
.edge { position: absolute; left: 1317px; color: #98a3b2; font-size: 26px; line-height: 30px; }
.e1 { top: 739px; }
.e2 { top: 779px; font-size: 20px; }

.menu {
  position: absolute; left: 315px; top: 153px;
  width: 217px; height: 215px; box-sizing: border-box;
  background: #fff; border: 1px solid #b8bcbe; box-shadow: 1px 1px 2px rgba(0, 0, 0, 0.25);
}
.menu-top { display: flex; height: 149px; }
.views { flex: 1; margin: 0.5px 0 0; padding: 0; list-style: none; }
.views li { height: 18.300px; display: flex; align-items: center; }
.txt { padding-left: 25px; font-size: 13px; color: #333; }
.view { padding-left: 5px; font: 10.5px "Liberation Serif", serif; color: #9a9a9a; }
.view span { margin-left: 3px; letter-spacing: 0.2px; }
.mscroll { width: 17px; margin-right: 1px; display: flex; flex-direction: column; background: #eef0f0; border-left: 1px solid #d5d7d8; box-sizing: border-box; }
.mthumb { height: 98px; background: #fbfbfb; border: 1px solid #d5d7d8; margin: 1px 1px 0; display: flex; align-items: center; justify-content: center; }
.mscroll .sbtn:last-child { margin-top: auto; }
.menu-sep { height: 1px; background: #d6d8d9; margin: 2px 0 4px; }
.mbtn { height: 28px; margin-left: 3px; width: 106px; box-sizing: border-box; border: 1px solid transparent; display: flex; align-items: center; font-size: 13px; padding-left: 3px; white-space: nowrap; }
.mbtn svg { margin-right: 1px; flex: none; }
.mbtn.hover { background: #f4f4f4; border-color: #ccc; }
.acc { margin-left: 3px; color: #888; font: 11px "Liberation Serif", serif; letter-spacing: 2px; }

.tooltip {
  position: absolute; left: 372px; top: 341px;
  width: 151px; height: 69px; box-sizing: border-box; padding: 8px 0 0 14px;
  background: linear-gradient(#e6f1fa, #d9e9f5); border: 1px solid #c6ced4;
  box-shadow: 1px 1px 2px rgba(0, 0, 0, 0.3);
}
.tip-head { display: flex; align-items: center; gap: 4px; height: 22px; }
.tip-head b { font-size: 12.5px; color: #222; }
.tooltip p { margin: 5px 0 0; font-size: 12.5px; color: #333; white-space: nowrap; }
.cursor { position: absolute; left: 371px; top: 321px; }
.progress { position: absolute; left: 164px; top: 15px; width: 58px; height: 8px; background: #555; border-radius: 4px; }
.progress span { display: block; margin: 1px 0 0 3px; width: 12px; height: 6px; background: repeating-linear-gradient(90deg, #6cc86c 0 1px, #2f7a3a 1px 2px); }
</style>
